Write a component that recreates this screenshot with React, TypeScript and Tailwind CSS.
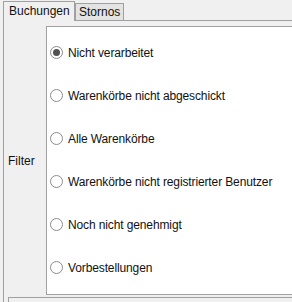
import React from "react";

const items = [
  { label: "Nicht verarbeitet", checked: true },
  { label: "Warenkörbe nicht abgeschickt", checked: false },
  { label: "Alle Warenkörbe", checked: false },
  { label: "Warenkörbe nicht registrierter Benutzer", checked: false },
  { label: "Noch nicht genehmigt", checked: false },
  { label: "Vorbestellungen", checked: false },
];

function Radio({ checked }: { checked: boolean }) {
  return (
    <span className="w-[13px] h-[13px] rounded-full border border-[#8c8c8c] bg-white flex items-center justify-center shrink-0">
      {checked && <span className="w-[7px] h-[7px] rounded-full bg-[#505050]" />}
    </span>
  );
}

export default function App() {
  return (
    <div
      className="w-[292px] h-[302px] overflow-hidden bg-[#f0f0f0] text-[12px] text-[#111] leading-none"
      style={{ fontFamily: '"Liberation Sans", Arial, sans-serif' }}
    >
      <div className="flex items-end h-[20px] pl-[3px]">
        <div className="relative z-10 h-[20px] -mb-px w-[72px] border-l border-t border-r border-[#a0a0a0] bg-[#f0f0f0] flex items-center pl-[5px] pb-[1px]">
          Buchungen
        </div>
        <div className="h-[17px] w-[49px] border-l border-t border-r border-[#a0a0a0] bg-[#e3e3e3] flex items-center pl-[3px]">
          Stornos
        </div>
      </div>
      <div className="ml-[3px] border-l border-t border-[#a0a0a0] w-[400px]">
        <div className="flex pt-[5px]">
          <div className="w-[42px] pl-[4px] flex items-center">Filter</div>
          <div className="flex-1 bg-white border-l border-t border-b border-[#a0a0a0] pt-[4px] pb-[5px]">
            {items.map((it) => (
              <div key={it.label} className="h-[43px] flex items-center pl-[3px] gap-[5px] tracking-[-0.12px]">
                <Radio checked={it.checked} />
                <span>{it.label}</span>
              </div>
            ))}
          </div>
        </div>
        <div className="ml-[4px] mt-[2px] h-[20px] border-l border-t border-[#a0a0a0] bg-[#f0f0f0]" />
      </div>
    </div>
  );
}
